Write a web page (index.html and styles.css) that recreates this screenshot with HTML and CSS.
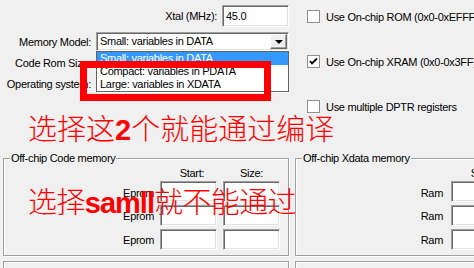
FILE: index.html
```html
<!DOCTYPE html>
<html lang="zh-CN">
<head>
    <meta charset="UTF-8">
    <meta name="viewport" content="width=device-width, initial-scale=1.0">
    <title>Target options</title>
    <link rel="stylesheet" href="styles.css">
</head>
<body>
    <div class="dialog">
        <div class="top">
            <div class="settings">
                <div class="xtal-row">
                    <span>Xtal (MHz):</span>
                    <div class="field xtal">45.0</div>
                </div>

                <div class="form-grid">
                    <span class="lbl">Memory Model:</span>
                    <div class="combo"><span>Small: variables in DATA</span><span class="drop-btn"></span></div>
                    <span class="lbl">Code Rom Size:</span>
                    <div class="combo"><span></span><span class="drop-btn"></span></div>
                    <span class="lbl">Operating system:</span>
                    <div class="combo"><span></span><span class="drop-btn"></span></div>
                </div>

                <!-- lista desplegada del combo -->
                <ul class="listbox">
                    <li class="selected">Small: variables in DATA</li>
                    <li>Compact: variables in PDATA</li>
                    <li>Large: variables in XDATA</li>
                </ul>
                <div class="callout"></div>
            </div>

            <div class="options">
                <div class="check"><span class="box"></span>Use On-chip ROM (0x0-0xEFFF)</div>
                <div class="check"><span class="box"><svg width="9" height="9" viewBox="0 0 9 9"><polyline points="1,4 3,6.5 8,1.5" fill="none" stroke="#000" stroke-width="1.8"/></svg></span>Use On-chip XRAM (0x0-0x3FF)</div>
                <div class="check"><span class="box"></span>Use multiple DPTR registers</div>
            </div>
        </div>

        <p class="note">选择这<b>2</b>个就能通过编译</p>

        <div class="groups">
            <fieldset class="group code">
                <legend>Off-chip Code memory</legend>
                <div class="mem-grid">
                    <span></span><span class="col-head start">Start:</span><span class="col-head">Size:</span>
                    <span class="lbl">Eprom</span><div class="field"></div><div class="field"></div>
                    <span class="lbl">Eprom</span><div class="field"></div><div class="field"></div>
                    <span class="lbl">Eprom</span><div class="field"></div><div class="field"></div>
                </div>
            </fieldset>
            <fieldset class="group xdata">
                <legend>Off-chip Xdata memory</legend>
                <div class="mem-grid">
                    <span></span><span class="col-head start">Start:</span><span class="col-head">Size:</span>
                    <span class="lbl">Ram</span><div class="field"></div><div class="field"></div>
                    <span class="lbl">Ram</span><div class="field"></div><div class="field"></div>
                    <span class="lbl">Ram</span><div class="field"></div><div class="field"></div>
                </div>
            </fieldset>
        </div>

        <div class="groups lower">
            <fieldset class="group code"></fieldset>
            <fieldset class="group xdata"></fieldset>
        </div>

        <p class="note note-second">选择<b>samll</b>就不能通过</p>
    </div>
</body>
</html>
```

FILE: styles.css
```css
:root {
    --face: #f0f0f0;
    --shadow: #a0a0a0;
    --dark: #696969;
    --light: #e3e3e3;
    --highlight: #3399ff;
}

* {
    margin: 0;
    padding: 0;
    box-sizing: border-box;
}

body {
    width: 474px;
    height: 268px;
    overflow: hidden;
    background-color: var(--face);
    font-family: 'Liberation Sans', Arial, sans-serif;
    font-size: 11px;
    letter-spacing: -0.3px;
    color: #000;
}

.dialog {
    position: relative;
    width: 474px;
    height: 268px;
    overflow: hidden;
    white-space: nowrap;
}

.top {
    display: flex;
}

.settings {
    position: relative;
    width: 289px;
    flex-shrink: 0;
}

.xtal-row {
    display: flex;
    justify-content: flex-end;
    align-items: center;
    gap: 5px;
    margin-top: 5px;
    height: 22px;
}

.field {
    background: #fff;
    border: 1px solid;
    border-color: var(--shadow) #fff #fff var(--shadow);
    box-shadow: inset 1px 1px var(--dark), inset -1px -1px var(--light);
}

.xtal {
    width: 67px;
    height: 22px;
    padding: 3px 0 0 3px;
    line-height: 14px;
}

.form-grid {
    display: grid;
    grid-template-columns: 91px 193px;
    grid-auto-rows: 19px;
    column-gap: 5px;
    row-gap: 2px;
    margin-top: 5px;
    align-items: center;
}

.lbl {
    text-align: right;
}

.combo {
    display: flex;
    justify-content: space-between;
    align-items: stretch;
    height: 19px;
    background: #fff;
    border: 1px solid;
    border-color: var(--shadow) #fff #fff var(--shadow);
    box-shadow: inset 1px 1px var(--dark), inset -1px -1px var(--light);
    padding: 1px 1px 1px 3px;
    line-height: 15px;
}

.drop-btn {
    width: 17px;
    background: var(--face);
    border: 1px solid;
    border-color: #fff var(--dark) var(--dark) #fff;
    box-shadow: inset -1px -1px var(--shadow);
    display: flex;
    align-items: center;
    justify-content: center;
}

.drop-btn::after {
    content: "";
    border-left: 4px solid transparent;
    border-right: 4px solid transparent;
    border-top: 4px solid #000;
    margin-top: 1px;
}

.listbox {
    position: absolute;
    top: 51px;
    left: 96px;
    width: 193px;
    list-style: none;
    background: #fff;
    border: 1px solid #646464;
}

.listbox li {
    height: 13px;
    line-height: 13px;
    padding-left: 3px;
}

.listbox .selected {
    background: var(--highlight);
    color: #fff;
}

.callout {
    position: absolute;
    top: 61px;
    left: 80px;
    width: 191px;
    height: 40px;
    border: 7px solid #ff0000;
}

.options {
    display: flex;
    flex-direction: column;
    gap: 32px;
    margin-left: 18px;
    padding-top: 10px;
}

.check {
    display: flex;
    align-items: center;
    gap: 6px;
    height: 13px;
}

.box {
    width: 13px;
    height: 13px;
    flex-shrink: 0;
    background: #fff;
    border: 1px solid #8e8f8f;
    display: flex;
    align-items: center;
    justify-content: center;
}

.note {
    margin-left: 28px;
    font-family: 'Noto Sans CJK SC', sans-serif;
    font-weight: 300;
    font-size: 29px;
    line-height: 29px;
    letter-spacing: 0;
    color: #ff0000;
}

.note b {
    font-family: 'Liberation Sans', Arial, sans-serif;
    font-weight: bold;
}

.note-second {
    position: absolute;
    top: 186px;
    left: 0;
    letter-spacing: -0.6px;
}

.note-second b {
    letter-spacing: -1px;
}

.groups {
    display: flex;
    margin-top: 7px;
}

.group {
    border: 1px solid var(--shadow);
    box-shadow: inset 1px 1px #fff, 1px 1px #fff;
    padding: 0 0 5px 0;
    flex-shrink: 0;
}

.group legend {
    margin-left: 6px;
    padding: 0 1px;
    line-height: 13px;
    background: var(--face);
}

.code {
    width: 286px;
    margin-left: 3px;
}

.xdata {
    width: 300px;
    margin-left: 6px;
}

.mem-grid {
    display: grid;
    grid-template-columns: 1fr 57px 57px;
    grid-template-rows: 13px 21px 21px 21px;
    column-gap: 6px;
    row-gap: 3px;
    padding-right: 8px;
    align-items: center;
}

.mem-grid .field {
    height: 21px;
}

.mem-grid > :nth-child(4) {
    margin-top: 2px;
}

.xdata .mem-grid {
    grid-template-columns: 147px 57px 57px;
    column-gap: 8px;
}

.col-head {
    text-align: center;
    margin-bottom: -2px;
}

.col-head.start {
    padding-left: 7px;
}

.lower {
    margin-top: 5px;
}

.lower .group {
    height: 40px;
}
```
